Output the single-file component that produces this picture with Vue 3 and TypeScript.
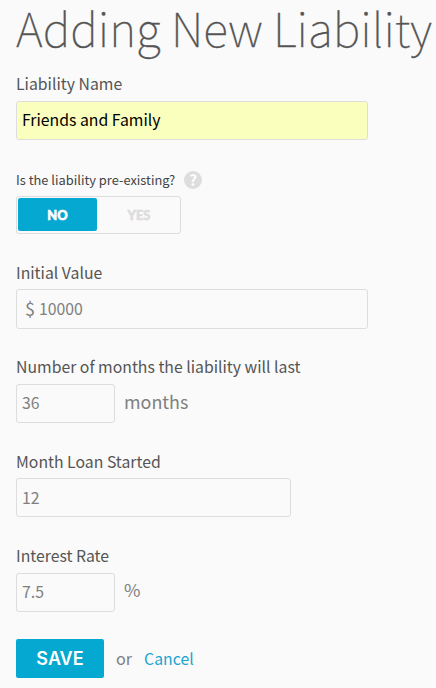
<script setup lang="ts">
import { ref } from 'vue'

const name = ref('Friends and Family')
const existing = ref(false)
const initialValue = ref('10000')
const duration = ref('36')
const startMonth = ref('12')
const rate = ref('7.5')
</script>

<template>
  <form class="form" @submit.prevent>
    <h1 class="title">Adding New Liability</h1>

    <div class="field field-name">
      <label for="name">Liability Name</label>
      <input id="name" v-model="name" class="input wide filled" type="text" />
    </div>

    <div class="field field-existing">
      <div class="question">
        <span class="question-text">Is the liability pre-existing?</span>
        <span class="help">?</span>
      </div>
      <div class="toggle">
        <button type="button" :class="{ on: !existing }" @click="existing = false">NO</button>
        <button type="button" :class="{ on: existing }" @click="existing = true">YES</button>
      </div>
    </div>

    <div class="field field-value">
      <label for="value">Initial Value</label>
      <div class="input wide money">
        <span class="currency">$</span>
        <input id="value" v-model="initialValue" type="text" />
      </div>
    </div>

    <div class="field field-duration">
      <label for="duration">Number of months the liability will last</label>
      <div class="row">
        <input id="duration" v-model="duration" class="input short" type="text" />
        <span class="unit">months</span>
      </div>
    </div>

    <div class="field field-start">
      <label for="start">Month Loan Started</label>
      <input id="start" v-model="startMonth" class="input medium" type="text" />
    </div>

    <div class="field field-rate">
      <label for="rate">Interest Rate</label>
      <div class="row">
        <input id="rate" v-model="rate" class="input short" type="text" />
        <span class="unit percent">%</span>
      </div>
    </div>

    <div class="actions">
      <button type="submit" class="save">SAVE</button>
      <span class="or">or</span>
      <a class="cancel" href="#" @click.prevent>Cancel</a>
    </div>
  </form>
</template>

<style>
html,
body {
  background: #fafafa;
}
</style>

<style scoped>
.form {
  box-sizing: border-box;
  width: 436px;
  height: 688px;
  padding: 0 0 0 16px;
  color: #555;
  font-family: 'Source Sans Pro', 'Noto Sans CJK SC', sans-serif;
  font-size: 15.8px;
}
.title {
  margin: 0;
  height: 72px;
  font-size: 46.4px;
  font-weight: 100;
  line-height: 54px;
  -webkit-text-stroke: 0.3px #555;
  white-space: nowrap;
}
label {
  display: block;
  height: 29px;
  line-height: 23px;
}
.input {
  display: block;
  box-sizing: border-box;
  height: 39px;
  margin: 0;
  padding: 0 5px 2px;
  border: 1px solid #ddd;
  border-radius: 3px;
  background: transparent;
  color: #808080;
  font: inherit;
  font-size: 15.8px;
  outline: none;
}
.wide { width: 352px; }
.medium { width: 275px; }
.short { width: 99px; }
.filled {
  background: #faffbd;
  color: #000;
}
.field-name { height: 97px; }
.field-existing { height: 92px; }
.field-value { height: 94px; }
.field-value label { height: 28px; }
.field-duration { height: 95px; }
.field-duration label { height: 29px; }
.field-start { height: 94px; }
.field-start label { height: 28px; }
.field-start .input { padding-bottom: 0; }
.field-rate { height: 95px; }
.question {
  display: flex;
  align-items: center;
  gap: 9px;
  height: 22px;
  margin-bottom: 5px;
}
.question-text {
  padding-bottom: 1px;
  font-size: 12.87px;
  color: #444;
}
.help {
  width: 18px;
  height: 18px;
  border-radius: 50%;
  background: #ddd;
  color: #fff;
  font-size: 15px;
  font-weight: 700;
  line-height: 17px;
  text-align: center;
}
.toggle {
  display: flex;
  box-sizing: border-box;
  width: 165px;
  height: 38px;
  padding: 1px;
  border: 1px solid #ddd;
  border-radius: 3px;
}
.toggle button {
  flex: 0 0 79px;
  height: 33px;
  padding: 1px 0 0;
  border: 0;
  border-radius: 2px;
  background: transparent;
  color: #ddd;
  font-family: Lato, sans-serif;
  font-size: 12.8px;
  font-weight: 900;
  -webkit-text-stroke: 0.6px currentColor;
}
.toggle button + button { flex-basis: 84px; }
.toggle button.on {
  background: #05a8d0;
  color: #fff;
}
.money {
  display: flex;
  align-items: center;
  height: 40px;
  padding-left: 8px;
}
.currency {
  width: 14px;
  font-size: 18px;
  line-height: 36px;
}
.money input {
  flex: 1;
  min-width: 0;
  padding: 0;
  border: 0;
  background: none;
  color: inherit;
  font: inherit;
  outline: none;
}
.row {
  display: flex;
}
.unit {
  margin-left: 9px;
  color: #808080;
  font-size: 17.9px;
  line-height: 34px;
}
.percent { line-height: 33px; }
.actions {
  display: flex;
}
.save {
  width: 88px;
  height: 39px;
  padding: 0;
  border: 0;
  border-radius: 2px;
  background: #05a8d0;
  color: #fff;
  font-family: Inter, sans-serif;
  font-size: 18px;
  font-weight: 600;
}
.or {
  margin-left: 12px;
  color: #808080;
  font-size: 16.2px;
  line-height: 39px;
}
.cancel {
  margin-left: 12px;
  color: #1ba5d0;
  font-size: 15.8px;
  line-height: 39px;
  text-decoration: none;
}
</style>
